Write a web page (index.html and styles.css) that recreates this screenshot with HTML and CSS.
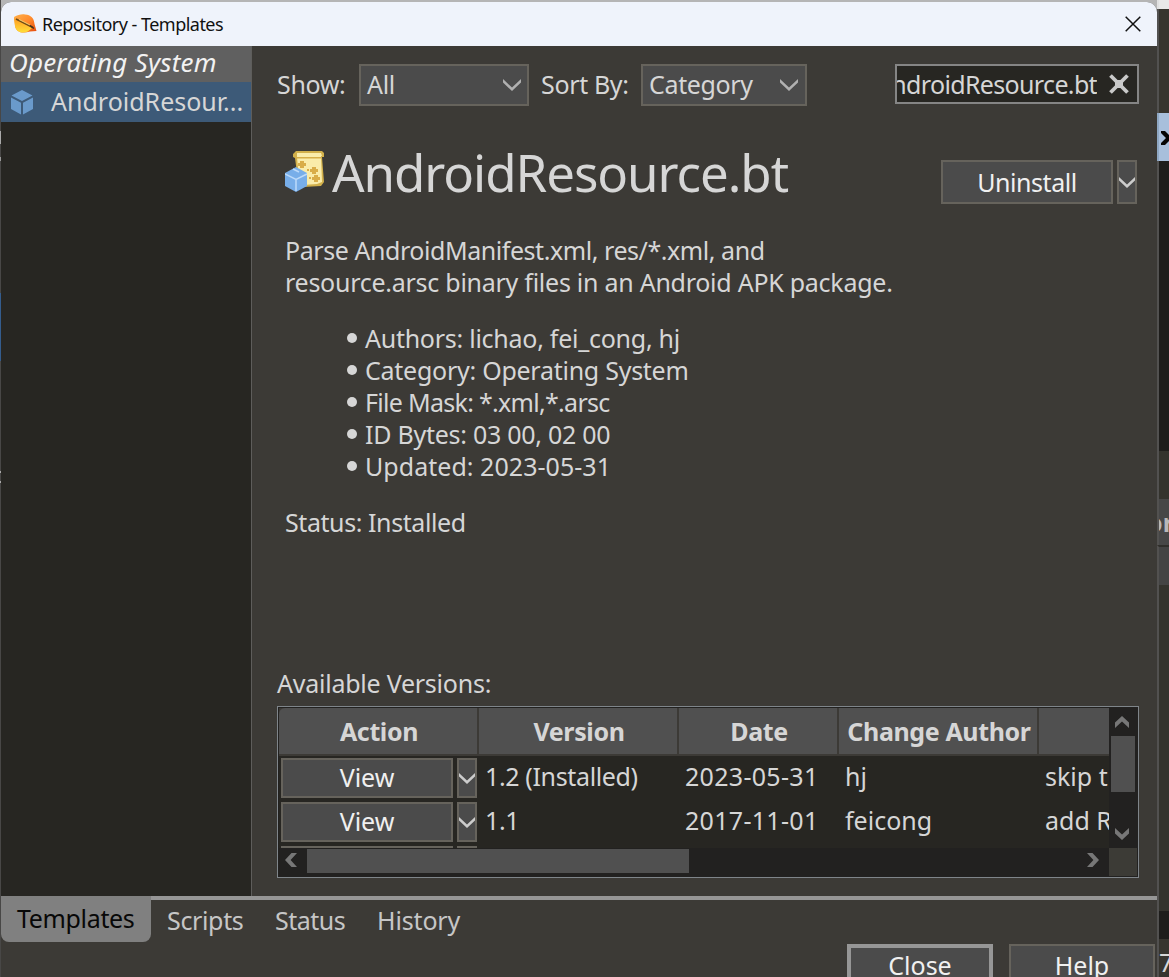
FILE: index.html
```html
<!DOCTYPE html>
<html lang="en">
<head>
<meta charset="utf-8">
<title>Repository - Templates</title>
<link rel="stylesheet" href="styles.css">
</head>
<body>
<svg class="defs" width="0" height="0">
  <symbol id="chev" viewBox="0 0 18 12"><path d="M0 0L9 8.6L18 0V3.6L9 12L0 3.6Z" fill="currentColor"/></symbol>
  <symbol id="arrow" viewBox="0 0 14 12"><path d="M0 12V6.5L7 0L14 6.5V12L7 5.6Z" fill="currentColor"/></symbol>
</svg>
<div class="screen">
  <div class="left-strip"><i class="s1"></i><i class="s2"></i><i class="s3"></i><i class="s4"></i><i class="s5"></i></div>
  <div class="window">
    <header class="titlebar">
      <svg class="app-icon" width="24" height="20" viewBox="0 0 24 20">
        <defs>
          <linearGradient id="og" x1="0" y1="0" x2="1" y2="1"><stop offset="0" stop-color="#ffb14a"/><stop offset=".5" stop-color="#ff8a2c"/><stop offset="1" stop-color="#e4480c"/></linearGradient>
          <linearGradient id="yg" x1="0" y1="0" x2="0" y2="1"><stop offset="0" stop-color="#ff9a20"/><stop offset="1" stop-color="#ffdf3a"/></linearGradient>
        </defs>
        <path d="M1 3C5 1 8 0 12 .5C18 1 21 4 21.500 10L23.500 17L17 17.500C9 20 3 18 2 12Z" fill="url(#og)"/>
        <path d="M1 4L19 14L15 17.500C9 20 3 18 2 12Z" fill="url(#yg)"/>
        <path d="M3 5L20 13.500" stroke="#6d4a16" stroke-width="1.600"/>
        <path d="M6 5.500L17 11" stroke="#ffe27a" stroke-width=".8"/>
        <path d="M17 11.500l4 3" stroke="#403020" stroke-width="1.500"/>
      </svg>
      <span class="title">Repository - Templates</span>
      <svg class="close-x" width="16" height="16" viewBox="0 0 16 16"><path d="M.7.700l14.600 14.600M15.300.700L.700 15.300" stroke="#111" stroke-width="1.500"/></svg>
    </header>
    <div class="body">
      <aside class="sidebar">
        <div class="group"><span>Operating System</span></div>
        <div class="item">
          <svg width="22" height="25" viewBox="0 0 22 25"><path d="M11 0L21.500 5.500L11 11L.500 5.500ZM0 7.500L10 12.700V24.500L0 19ZM22 7.500L12 12.700V24.500L22 19Z" fill="#6a9acb"/></svg>
          <span>AndroidResour...</span>
        </div>
      </aside>
      <main class="main">
        <div class="toolbar">
          <span class="show-label">Show:</span>
          <div class="select all"><span>All</span><svg width="18" height="12"><use href="#chev"/></svg></div>
          <span class="sort-label">Sort By:</span>
          <div class="select cat"><span>Category</span><svg width="18" height="12"><use href="#chev"/></svg></div>
          <div class="search">
            <div class="query"><span>AndroidResource.bt</span></div>
            <svg width="20" height="20" viewBox="0 0 20 20"><path d="M1.500 1.500L18.500 18.500M18.500 1.500L1.500 18.500" stroke="#c9c9c9" stroke-width="3.800"/><path d="M6 6h8v8H6z" fill="#c9c9c9"/></svg>
          </div>
        </div>
        <div class="heading">
          <svg width="40" height="41" viewBox="0 0 40 41">
            <path d="M11 0H37L39 2V6H37L39 31L36 35L18 36L13 30L10 7L8 6V3Z" fill="#d2b04b"/>
            <path d="M12 2H36L37 5H36L37 31L32 33L18 34L14 28L12 6Z" fill="#faecaa"/>
            <path d="M11 6H36V7.500H12Z" fill="#d6ae48"/>
            <path d="M15 10h4v2h2v3h-2v2h-4v-2h-2v-3h2zM27 16h4v2h2v3h-2v2h-4v-2h-2v-3h2zM29 24h4v2h2v3h-2v2h-4v-2h-2v-3h2zM22 18h2v2h-2zM24 26h2v2h-2z" fill="#d9ad49"/>
            <path d="M11 16L22 22V35L11 41L0 35V22Z" fill="#78aee9"/>
            <path d="M0 23L11 28.500L22 23M11 28.500V40M8 18l6 3" stroke="#bcdafa" stroke-width="1.500" fill="none"/>
          </svg>
          <h1>AndroidResource.bt</h1>
          <div class="split top"><div class="btn"><span class="uninstall">Uninstall</span></div><div class="drop"><svg width="18" height="12"><use href="#chev"/></svg></div></div>
        </div>
        <div class="desc">
          <p class="d1">Parse AndroidManifest.xml, res/*.xml, and</p>
          <p class="d2">resource.arsc binary files in an Android APK package.</p>
        </div>
        <ul>
          <li><span>Authors: lichao, fei_cong, hj</span></li>
          <li><span>Category: Operating System</span></li>
          <li><span class="mask">File Mask: *.xml,*.arsc</span></li>
          <li><span>ID Bytes: 03 00, 02 00</span></li>
          <li><span class="updated">Updated: 2023-05-31</span></li>
        </ul>
        <p class="status">Status: Installed</p>
        <p class="avail">Available Versions:</p>
        <div class="table">
          <div class="grid">
            <div class="row head"><b>Action</b><b>Version</b><b>Date</b><b>Change Author</b><b></b></div>
            <div class="row"><div class="split"><div class="btn"><span>View</span></div><div class="drop"><svg width="18" height="12"><use href="#chev"/></svg></div></div><span class="v">1.2 (Installed)</span><span class="dt">2023-05-31</span><span>hj</span><span>skip the</span></div>
            <div class="row"><div class="split"><div class="btn"><span>View</span></div><div class="drop"><svg width="18" height="12"><use href="#chev"/></svg></div></div><span class="v">1.1</span><span class="dt">2017-11-01</span><span>feicong</span><span>add RES</span></div>
            <div class="row"><div class="split"><div class="btn"></div><div class="drop"></div></div></div>
          </div>
          <div class="vbar"><svg width="14" height="12"><use href="#arrow"/></svg><div class="thumb"></div><svg class="down" width="14" height="12"><use href="#arrow"/></svg></div>
          <div class="hbar"><svg class="lt" width="12" height="14" viewBox="0 0 12 14"><path d="M12 0H6.500L0 7L6.500 14H12L5.600 7Z" fill="currentColor"/></svg><div class="thumb"></div><svg class="rt" width="12" height="14" viewBox="0 0 12 14"><path d="M0 0H5.500L12 7L5.500 14H0L6.400 7Z" fill="currentColor"/></svg></div>
          <div class="corner"></div>
        </div>
      </main>
    </div>
    <nav class="tabs">
      <div class="tab active"><span>Templates</span></div>
      <div class="tab scripts"><span>Scripts</span></div>
      <div class="tab stat"><span>Status</span></div>
      <div class="tab history"><span>History</span></div>
    </nav>
    <footer><div class="btn close"><span>Close</span></div><div class="btn help"><span>Help</span></div></footer>
  </div>
  <div class="right-strip">
    <i class="r1"></i><i class="r2"></i>
    <i class="r3"><svg width="9" height="14" viewBox="0 0 9 14"><path d="M0 0H4L9 5V9L4 14H0V12L5 7L0 2Z" fill="#050505"/></svg></i>
    <i class="r4"></i><i class="r5"></i><i class="r6"><b>or</b></i><i class="r7"></i><i class="r8"></i><i class="r9"></i><i class="r10"><span>7</span></i>
  </div>
</div>
</body>
</html>
```

FILE: styles.css
```css
* { box-sizing: border-box; }
body { margin: 0; width: 1169px; height: 977px; overflow: hidden; background: #b5b5b5; font: 25px/32px "Noto Sans", "Open Sans", sans-serif; color: #d6d6d6; }
p, ul, h1 { margin: 0; padding: 0; }
span, p { white-space: nowrap; }
svg { display: block; flex: none; }
.defs { position: absolute; }
.screen { display: grid; grid-template-columns: 1px 1156px 12px; height: 977px; overflow: hidden; }
.window { margin-top: 2px; height: 975px; display: flex; flex-direction: column; background: #3c3a36; border-radius: 10px 10px 0 0; overflow: hidden; }
.titlebar { height: 44px; flex: none; background: #eff3fb; color: #111; display: flex; align-items: center; padding: 0 16px 1px 12px; font-size: 18px; }
.title { margin-left: 5px; letter-spacing: -.52px; }
.close-x { margin-left: auto; }
.body { height: 850px; flex: none; display: flex; }
.sidebar { width: 251px; background: #272622; border-right: 1px solid #5e5d5b; }
.group { height: 36px; background: #606060; color: #f2f2f2; font-style: italic; padding-left: 8px; font-size: 26px; line-height: 33px; letter-spacing: .2px; }
.item { height: 40px; background: #3d5a78; display: flex; align-items: center; padding-left: 10px; gap: 18px; }
.item span { margin-top: -3px; }
.main { width: 905px; padding: 18px 18px 0 25px; }
.toolbar { display: flex; height: 42px; align-items: center; letter-spacing: -.35px; }
.toolbar span { margin-top: -2px; }
.show-label { width: 82px; }
.select { height: 42px; border: 2px solid #66635c; background: #4b4b4b; display: flex; align-items: center; justify-content: space-between; padding: 0 6px; }
.select svg { color: #b0b0b0; }
.all { width: 170px; }
.cat { width: 166px; padding-right: 7px; }
.sort-label { width: 100px; margin-left: 12px; }
.search { width: 244px; height: 40px; margin: 0 0 2px 88px; border: 2px solid #858585; background: #272622; display: flex; align-items: center; gap: 12px; }
.query { width: 200px; flex: none; overflow: hidden; display: flex; justify-content: flex-end; letter-spacing: -.65px; }
.toolbar .query span { margin-top: 0; }
.heading { margin: 42px 0 0 8px; height: 58px; display: flex; align-items: center; }
.heading > svg { margin-top: -11px; }
h1 { font-size: 51px; line-height: 58px; font-weight: 400; margin: -10px 0 0 7px; letter-spacing: -1.05px; }
.split { display: flex; gap: 4px; }
.btn { height: 40px; width: 172px; border: 2px solid #66635c; background: #4b4b4b; color: #f0f0f0; display: flex; align-items: center; justify-content: center; }
.btn span { margin-top: -2px; }
.uninstall { letter-spacing: -.45px; }
.drop { width: 20px; height: 40px; border: 2px solid #66635c; background: #4b4b4b; color: #ccc; display: flex; align-items: center; justify-content: center; overflow: hidden; }
.top { margin: 10px 2px 0 auto; }
.top .btn, .top .drop { height: 44px; }
.top .btn span { margin-top: 0; }
.desc { margin: 28px 0 0 8px; height: 64px; }
.d1 { letter-spacing: -.44px; }
.d2 { letter-spacing: -.26px; }
ul { list-style: none; margin: 24px 0 0 70px; letter-spacing: -.26px; }
li { height: 32px; display: flex; align-items: center; gap: 8px; }
li::before { content: ""; width: 10px; height: 10px; border-radius: 50%; background: #d6d6d6; }
.mask { letter-spacing: -.7px; }
.updated { letter-spacing: .04px; }
.status { margin: 24px 0 0 8px; letter-spacing: -.42px; }
.avail { margin-top: 129px; letter-spacing: -.24px; }
.table { width: 862px; height: 172px; margin-top: 7px; border: 1px solid #7f858a; background: #222120; padding: 1px; display: grid; grid-template-columns: 830px 28px; grid-template-rows: 140px 28px; }
.grid { overflow: hidden; background: #272622; }
.row { display: grid; grid-template-columns: 200px 200px 160px 200px 200px; height: 44px; width: 960px; }
.row > span { padding: 2px 0 0 6px; line-height: 36px; }
.row > .v { letter-spacing: -.36px; }
.row > .dt { letter-spacing: .3px; }
.row .split { padding: 2px 0 0 2px; }
.head { height: 48px; color: #d6d6d6; background: #3c3a36; }
.head b { background: #505050; margin: 0 2px 2px 0; padding-left: 2px; text-align: center; line-height: 46px; white-space: nowrap; letter-spacing: -.38px; }
.head b:first-child { border-radius: 6px 0 0 0; }
.vbar { background: #222120; color: #777; display: flex; flex-direction: column; align-items: center; padding: 8px 3px 8px 0; }
.vbar .thumb { width: 24px; height: 56px; background: #505050; margin: 8px -3px 0 0; }
.down { margin-top: auto; transform: rotate(180deg); }
.hbar { background: #222120; color: #777; display: flex; align-items: center; padding: 0 10px 2px 6px; }
.hbar .thumb { width: 382px; height: 24px; background: #505050; margin-left: 10px; }
.hbar svg { margin-top: -2px; }
.rt { margin-left: auto; }
.corner { background: #3c3b36; }
.tabs { height: 46px; flex: none; display: flex; border-top: 4px solid #969696; color: #c6c6c6; letter-spacing: -.35px; }
.tab { padding: 5px 0 0 16px; line-height: 30px; }
.active { width: 150px; height: 46px; margin-top: -4px; background: #808080; color: #080808; border-radius: 0 0 8px 8px; padding-top: 7px; }
.scripts { width: 108px; }
.stat { width: 102px; letter-spacing: -.5px; }
.history { letter-spacing: -.15px; }
footer { display: flex; justify-content: flex-end; gap: 16px; padding: 2px 2px 0 0; }
footer .btn { width: 146px; height: 44px; flex: none; }
footer .close { border: 4px solid #969696; }
.left-strip { background: #484746; display: flex; flex-direction: column; padding-top: 131px; }
.left-strip i { width: 1px; flex: none; }
.s1 { height: 13px; background: #aaa; }
.s2 { height: 4px; background: #999; margin-top: 13px; }
.s3 { height: 68px; background: #345c8d; margin-top: 132px; }
.s4 { height: 2px; background: #aaa; margin-top: 110px; }
.s5 { height: 2px; background: #aaa; margin-top: 8px; }
.right-strip { display: flex; flex-direction: column; overflow: hidden; background: #34332d; }
.right-strip i { display: block; flex: none; width: 12px; border-left: 2px solid #525150; overflow: hidden; font-style: normal; }
.right-strip .r1 { height: 9px; background: #e8e8e8; border-color: #e0e0e0; }
.r2 { height: 104px; background: #37352f; }
.right-strip .r3 { height: 48px; background: #a8bfdc; border-color: #8fa8c4; padding: 18px 0 0 2px; }
.r4 { height: 290px; background: #1e1d1b; }
.r5 { height: 48px; background: #34332d; }
.r6 { height: 46px; background: #474747; line-height: 46px; color: #b8b8b8; }
.r6 b { margin-left: -12px; }
.r7 { height: 40px; background: #444; border-top: 2px solid #302f2b; }
.r8 { height: 326px; background: #34332d; }
.r9 { height: 28px; background: #1e1d1b; }
.r10 { height: 38px; background: #37352f; line-height: 46px; }
```
